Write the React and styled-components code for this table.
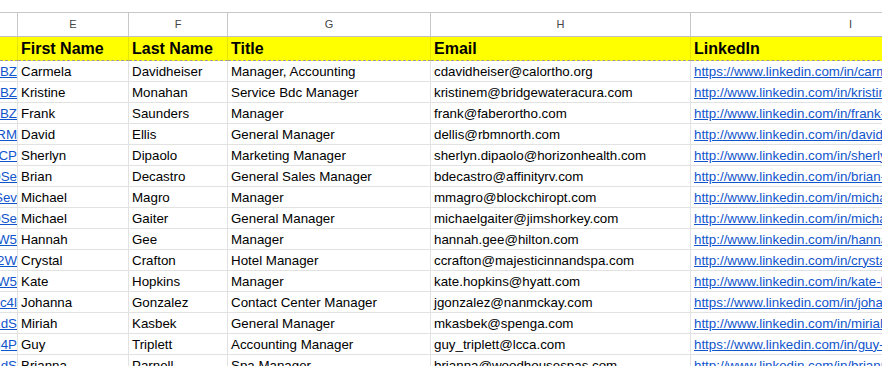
import React from "react";
import styled, { createGlobalStyle } from "styled-components";

const GlobalStyle = createGlobalStyle`
  html, body {
    margin: 0;
    padding: 0;
    background: #fff;
    overflow: hidden;
  }
  body {
    font-family: "Liberation Sans", Arial, sans-serif;
  }
`;

const COLS = "18px 111px 99px 203px 260px 320px";

const rows = [
  ["ttps://go.crm/a7BZ", "Carmela", "Davidheiser", "Manager, Accounting", "cdavidheiser@calortho.org", "https://www.linkedin.com/in/carmela-davidheiser"],
  ["ttps://go.crm/k2BZ", "Kristine", "Monahan", "Service Bdc Manager", "kristinem@bridgewateracura.com", "http://www.linkedin.com/in/kristine-monahan"],
  ["ttps://go.crm/f0BZ", "Frank", "Saunders", "Manager", "frank@faberortho.com", "http://www.linkedin.com/in/frank-saunders"],
  ["ttps://go.crm/dRM", "David", "Ellis", "General Manager", "dellis@rbmnorth.com", "http://www.linkedin.com/in/david-ellis"],
  ["ttps://go.crm/sCP", "Sherlyn", "Dipaolo", "Marketing Manager", "sherlyn.dipaolo@horizonhealth.com", "http://www.linkedin.com/in/sherlyn-dipaolo"],
  ["ttps://go.crm/b0Se", "Brian", "Decastro", "General Sales Manager", "bdecastro@affinityrv.com", "http://www.linkedin.com/in/brian-decastro"],
  ["ttps://go.crm/mSev", "Michael", "Magro", "Manager", "mmagro@blockchiropt.com", "http://www.linkedin.com/in/michael-magro"],
  ["ttps://go.crm/g0Se", "Michael", "Gaiter", "General Manager", "michaelgaiter@jimshorkey.com", "http://www.linkedin.com/in/michael-gaiter"],
  ["ttps://go.crm/h2W5", "Hannah", "Gee", "Manager", "hannah.gee@hilton.com", "http://www.linkedin.com/in/hannah-gee"],
  ["ttps://go.crm/c2W", "Crystal", "Crafton", "Hotel Manager", "ccrafton@majesticinnandspa.com", "http://www.linkedin.com/in/crystal-crafton"],
  ["ttps://go.crm/kW5", "Kate", "Hopkins", "Manager", "kate.hopkins@hyatt.com", "http://www.linkedin.com/in/kate-hopkins"],
  ["ttps://go.crm/jc4l", "Johanna", "Gonzalez", "Contact Center Manager", "jgonzalez@nanmckay.com", "https://www.linkedin.com/in/johanna-gonzalez"],
  ["ttps://go.crm/mRdS", "Miriah", "Kasbek", "General Manager", "mkasbek@spenga.com", "http://www.linkedin.com/in/miriah-kasbek"],
  ["ttps://go.crm/g4P", "Guy", "Triplett", "Accounting Manager", "guy_triplett@lcca.com", "https://www.linkedin.com/in/guy-triplett"],
  ["ttps://go.crm/bRdS", "Brianna", "Parnell", "Spa Manager", "brianna@woodhousespas.com", "http://www.linkedin.com/in/brianna-parnell"],
];

const Sheet = styled.div`
  padding-top: 12px;
  width: 1011px;
`;

const Row = styled.div`
  display: grid;
  grid-template-columns: ${COLS};
  height: ${(p) => p.$h}px;
  box-sizing: border-box;
  border-top: ${(p) => (p.$top ? "1px solid #c7c7c7" : "none")};
`;

const Cell = styled.div`
  box-sizing: border-box;
  display: flex;
  align-items: center;
  padding: 0 3px;
  overflow: hidden;
  white-space: nowrap;
  border-right: 1px solid #e2e2e2;
  border-bottom: 1px solid #e2e2e2;
  font-size: 13.33px;
  line-height: 15px;
  color: #000;
`;

const Letter = styled(Cell)`
  justify-content: center;
  font-size: 11px;
  color: #444;
  border-right-color: #c7c7c7;
  border-bottom-color: #c0c0c0;
`;

const Title = styled(Cell)`
  background: #ffff00;
  font-size: 16px;
  font-weight: bold;
  line-height: 18px;
  border-right-color: #e6e600;
  border-bottom: 1px dashed #9a9a9a;
`;

const Clip = styled(Cell)`
  justify-content: flex-end;
  padding: 0;
  span {
    flex-shrink: 0;
  }
`;

const Link = styled.a`
  color: #1155cc;
  text-decoration: underline;
`;

export default function App() {
  return (
    <>
      <GlobalStyle />
      <Sheet>
        <Row $h={25} $top>
          <Letter />
          <Letter>E</Letter>
          <Letter>F</Letter>
          <Letter>G</Letter>
          <Letter>H</Letter>
          <Letter>I</Letter>
        </Row>
        <Row $h={24}>
          <Title />
          <Title>First Name</Title>
          <Title>Last Name</Title>
          <Title>Title</Title>
          <Title>Email</Title>
          <Title>LinkedIn</Title>
        </Row>
        {rows.map((r, i) => (
          <Row key={i} $h={21}>
            <Clip>
              <span>
                <Link>{r[0]}</Link>
              </span>
            </Clip>
            <Cell>{r[1]}</Cell>
            <Cell>{r[2]}</Cell>
            <Cell>{r[3]}</Cell>
            <Cell>{r[4]}</Cell>
            <Cell>
              <Link>{r[5]}</Link>
            </Cell>
          </Row>
        ))}
      </Sheet>
    </>
  );
}
